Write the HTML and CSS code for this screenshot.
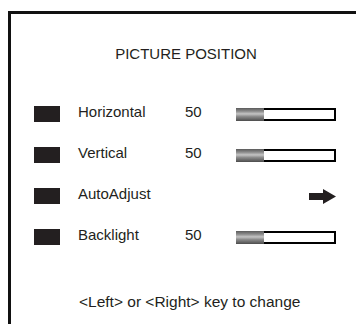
FILE: index.html
```html
<!DOCTYPE html>
<html lang="en">
<head>
    <meta charset="UTF-8">
    <meta name="viewport" content="width=device-width, initial-scale=1.0">
    <title>Picture Position</title>
    <link rel="stylesheet" href="styles.css">
</head>
<body>

    <div class="screen">
        <h2 class="title">PICTURE POSITION</h2>

        <div class="menu">
            <div class="row">
                <span class="key"></span>
                <span class="label">Horizontal</span>
                <span class="value">50</span>
                <span class="slot">
                    <span class="bar"><span class="fill"></span><span class="rest"></span></span>
                </span>
            </div>
            <div class="row">
                <span class="key"></span>
                <span class="label">Vertical</span>
                <span class="value">50</span>
                <span class="slot">
                    <span class="bar"><span class="fill"></span><span class="rest"></span></span>
                </span>
            </div>
            <div class="row">
                <span class="key"></span>
                <span class="label">AutoAdjust</span>
                <span class="value"></span>
                <span class="slot">
                    <svg class="arrow" width="27" height="15" viewBox="0 0 27 15">
                        <path d="M0 4 H14 V0 L27 7.5 L14 15 V11 H0 Z" fill="#231f20"/>
                    </svg>
                </span>
            </div>
            <div class="row">
                <span class="key"></span>
                <span class="label">Backlight</span>
                <span class="value">50</span>
                <span class="slot">
                    <span class="bar"><span class="fill"></span><span class="rest"></span></span>
                </span>
            </div>
        </div>

        <p class="hint">&lt;Left&gt; or &lt;Right&gt; key to change</p>
    </div>

</body>
</html>
```

FILE: styles.css
```css
body {
    margin: 0;
    overflow: hidden;
    background: #fff;
    font-family: "Liberation Sans", Arial, sans-serif;
    color: #231f20;
}
.screen {
    margin: 11px 0 0 8px;
    width: 345px;
    height: 279px;
    border-top: 3px solid #111;
    border-left: 3px solid #111;
    padding-top: 31px;
}
.title {
    margin: 0;
    padding-left: 5px;
    font-size: 15px;
    font-weight: normal;
    line-height: 17px;
    text-align: center;
}
.menu {
    margin-top: 44px;
    display: flex;
    flex-direction: column;
    gap: 25px;
}
.row {
    display: flex;
    align-items: center;
    height: 16px;
    padding-left: 23px;
    font-size: 15px;
    line-height: 16px;
}
.key {
    width: 26px;
    height: 16px;
    background: #231f20;
    margin-right: 18px;
}
.label {
    width: 107px;
    padding-bottom: 4px;
}
.value {
    width: 51px;
    padding-bottom: 4px;
}
.slot {
    width: 100px;
    display: flex;
    justify-content: flex-end;
}
.bar {
    display: flex;
    width: 100px;
    height: 13px;
}
.fill {
    width: 28px;
    background: linear-gradient(to bottom, #5a5a5a, #8c8c8c 25%, #c4c4c4 45%, #8c8c8c 65%, #4c4c4c);
}
.rest {
    flex: 1;
    background: #fff;
    border: 2px solid #000;
    border-left: none;
}
.arrow {
    display: block;
}
.hint {
    margin: 48px 0 0 68px;
    font-size: 15.5px;
    line-height: 18px;
}
```
